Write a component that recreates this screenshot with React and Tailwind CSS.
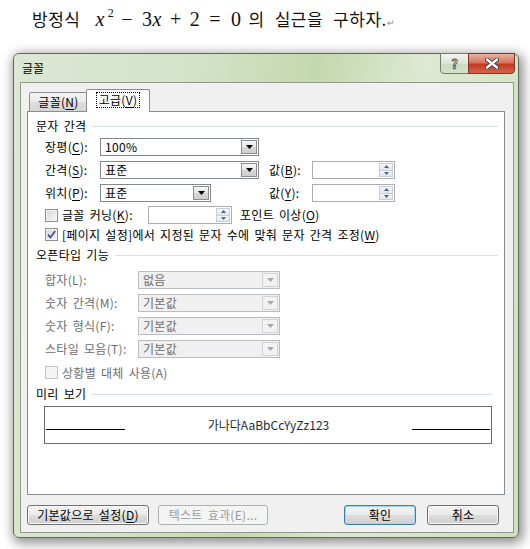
import clsx from 'clsx'

const KR = "font-['Noto_Sans_CJK_KR','Noto_Sans',sans-serif]"

const U = ({ children }) => <span className="underline underline-offset-[2px]">{children}</span>

const Tri = ({ color = '#000' }) => (
  <svg width="7" height="4" viewBox="0 0 7 4">
    <path d="M0 0h7L3.5 4z" fill={color} />
  </svg>
)

function Combo({ value, className, disabled }) {
  return (
    <div
      className={clsx(
        'flex h-[18px] items-stretch border p-px',
        disabled ? 'border-[#b9bcc0] bg-[#f0f0f0] text-[#6d6d6d]' : 'border-[#828790] bg-white text-black',
        className
      )}
    >
      <span className="flex flex-1 items-center pl-[3px] leading-none">{value}</span>
      <span
        className={clsx(
          'flex w-[16px] items-center justify-center border',
          disabled
            ? 'border-[#d2d2d2] bg-[#f2f2f2]'
            : 'border-[#8c8c8c] bg-[linear-gradient(#f6f6f6,#e6e6e6_50%,#d6d6d6_50%,#cfcfcf)]'
        )}
      >
        <Tri color={disabled ? '#a8a8a8' : '#000'} />
      </span>
    </div>
  )
}

const Arrow = ({ up }) => (
  <svg width="5" height="3" viewBox="0 0 5 3">
    <path d={up ? 'M0 3h5L2.5 0z' : 'M0 0h5L2.5 3z'} fill="#4d6185" />
  </svg>
)

function Spin({ className }) {
  return (
    <div className={clsx('flex h-[18px] border border-[#abadb3] bg-white p-px', className)}>
      <span className="flex-1" />
      <span className="flex w-[14px] flex-col">
        <span className="flex flex-1 items-center justify-center border border-[#c6ceda] bg-[linear-gradient(#f5f8fb,#dfe6ee)]">
          <Arrow up />
        </span>
        <span className="flex flex-1 items-center justify-center border border-t-0 border-[#c6ceda] bg-[linear-gradient(#f5f8fb,#dfe6ee)]">
          <Arrow />
        </span>
      </span>
    </div>
  )
}

function Checkbox({ checked, disabled }) {
  return (
    <span
      className={clsx(
        'flex h-[13px] w-[13px] shrink-0 items-center justify-center border',
        disabled
          ? 'border-[#c6c6c6] bg-[#f4f4f4]'
          : 'border-[#8e8f8f] bg-[linear-gradient(135deg,#d6d6d6,#f8f8f8)] shadow-[inset_0_0_0_1px_#f4f4f4]'
      )}
    >
      {checked && (
        <svg width="9" height="9" viewBox="0 0 9 9">
          <path d="M1 4.6l2.4 2.8L8.2 1" fill="none" stroke="#3b4f85" strokeWidth="1.7" />
        </svg>
      )}
    </span>
  )
}

function Header({ children, className }) {
  return (
    <div className={clsx('flex h-[14px] items-center gap-[6px] pl-[8px]', className)}>
      <span className="leading-none">{children}</span>
      <span className="h-px flex-1 bg-[#d5dfe5]" />
    </div>
  )
}

function Btn({ children, className, primary, disabled }) {
  return (
    <div
      className={clsx(
        'flex h-[20px] items-center justify-center rounded-[3px] border leading-none',
        disabled
          ? 'border-[#adb2b5] bg-[#f4f4f4] text-[#9a9a9a]'
          : primary
            ? 'border-[#3c7fb1] bg-[linear-gradient(#f2f2f2,#ebebeb_50%,#dddddd_50%,#cfcfcf)] shadow-[inset_0_0_0_1px_#9fd5f2]'
            : 'border-[#707070] bg-[linear-gradient(#f2f2f2,#ebebeb_50%,#dddddd_50%,#cfcfcf)] shadow-[inset_0_0_0_1px_#fbfbfb]',
        className
      )}
    >
      {children}
    </div>
  )
}

const OPENTYPE = [
  ['합자(L):', '없음'],
  ['숫자 간격(M):', '기본값'],
  ['숫자 형식(F):', '기본값'],
  ['스타일 모음(T):', '기본값'],
]

export default function App() {
  return (
    <div className={clsx('h-[549px] w-[530px] overflow-hidden bg-white text-[12px] text-black', KR)}>
      {/* equation line */}
      <div className="flex h-[53px] items-baseline whitespace-nowrap pl-[32px] pt-[6px] text-[17px] leading-[26px] tracking-[0.5px] text-[#111]">
        <span>방정식</span>
        <span className="ml-[15px] font-['Liberation_Serif',serif] text-[20px] italic">x</span>
        <span className="relative -top-[9px] ml-[3px] font-['Liberation_Serif',serif] text-[12px]">2</span>
        <span className="ml-[7px] font-['Liberation_Serif',serif] text-[20px]">−</span>
        <span className="ml-[9px] font-['Liberation_Serif',serif] text-[20px]">3</span>
        <span className="font-['Liberation_Serif',serif] text-[20px] italic">x</span>
        <span className="ml-[8px] font-['Liberation_Serif',serif] text-[20px]">+</span>
        <span className="ml-[8px] font-['Liberation_Serif',serif] text-[20px]">2</span>
        <span className="ml-[9px] font-['Liberation_Serif',serif] text-[20px]">=</span>
        <span className="ml-[10px] font-['Liberation_Serif',serif] text-[20px]">0</span>
        <span className="ml-[7px]">의</span>
        <span className="ml-[10px]">실근을</span>
        <span className="ml-[10px]">구하자.</span>
        <span className="text-[9px] text-[#8a8a8a]">↵</span>
      </div>

      {/* dialog window */}
      <div className="ml-[13px] flex h-[485px] w-[506px] flex-col rounded-[6px] border border-[#5f6a5c] bg-[linear-gradient(100deg,#dce7d4_0%,#d4e3c8_30%,#c4d8ae_52%,#dde9d2_70%,#cfe0bf_100%)] pl-[6px] pr-[4px] shadow-[2px_3px_12px_2px_rgba(0,0,0,0.45)]">
        {/* title bar */}
        <div className="flex h-[28px] shrink-0 justify-between">
          <span className="ml-[2px] self-center leading-none">글꼴</span>
          <div className="-mr-px -mt-px flex h-[21px]">
            <div className="flex w-[29px] items-center justify-center rounded-bl-[4px] border border-[#6f7d6c] bg-[linear-gradient(#f1f5ee,#dce6d5_50%,#cbd9c0_50%,#d5e2cb)] text-[13px] font-bold leading-none text-[#e9eee6] [-webkit-text-stroke:0.8px_#4a4f48]">
              ?
            </div>
            <div className="-ml-px flex w-[47px] items-center justify-center rounded-br-[4px] border border-[#7b3426] bg-[linear-gradient(#eab2a4,#d9735c_45%,#c2391f_55%,#d6644a)]">
              <svg width="14" height="11" viewBox="0 0 14 11">
                <path d="M2 1.5l10 8M12 1.5l-10 8" stroke="#3a3a3a" strokeWidth="4.2" strokeLinecap="round" />
                <path d="M2 1.5l10 8M12 1.5l-10 8" stroke="#fff" strokeWidth="2.4" strokeLinecap="round" />
              </svg>
            </div>
          </div>
        </div>

        {/* client area */}
        <div className="flex h-[451px] w-[494px] flex-col border border-[#8e9a8a] bg-[#f0f0f0] pl-[6px] pt-[6px] tracking-[0.3px] [word-spacing:2px]">
          {/* tabs */}
          <div className="flex h-[22px] items-end pl-[2px]">
            <div className="flex h-[19px] w-[59px] items-center justify-center rounded-tl-[2px] border border-b-0 border-[#898c95] bg-[linear-gradient(#f3f3f3,#ebebeb_50%,#dedede_50%,#d6d6d6)] leading-none">
              글꼴(<U>N</U>)
            </div>
            <div className="relative z-10 -mb-px -ml-[2px] flex h-[23px] w-[64px] items-center justify-center rounded-t-[2px] border border-b-0 border-[#898c95] bg-white pb-[2px]">
              <span className="border border-dotted border-black px-[2px] py-px leading-none">
                고급(<U>V</U>)
              </span>
            </div>
          </div>

          {/* panel */}
          <div className="flex h-[384px] w-[478px] flex-col border border-[#898c95] bg-white pr-[6px]">
            <Header className="mt-[7px]">문자 간격</Header>

            <div className="mt-[5px] flex h-[18px] items-center pl-[17px]">
              <span className="w-[55px] leading-none">장평(<U>C</U>):</span>
              <Combo value="100%" className="w-[159px]" />
            </div>

            <div className="mt-[5px] flex h-[18px] items-center pl-[17px]">
              <span className="w-[55px] leading-none">간격(<U>S</U>):</span>
              <Combo value="표준" className="w-[159px]" />
              <span className="ml-[10px] w-[43px] leading-none">값(<U>B</U>):</span>
              <Spin className="w-[83px]" />
            </div>

            <div className="mt-[5px] flex h-[18px] items-center pl-[17px]">
              <span className="w-[55px] leading-none">위치(<U>P</U>):</span>
              <div className="w-[159px]">
                <Combo value="표준" className="w-[111px]" />
              </div>
              <span className="ml-[10px] w-[43px] leading-none">값(<U>Y</U>):</span>
              <Spin className="w-[83px]" />
            </div>

            <div className="mt-[4px] flex h-[18px] items-center pl-[17px]">
              <Checkbox />
              <span className="ml-[4px] w-[86px] whitespace-nowrap leading-none">
                글꼴 커닝(<U>K</U>):
              </span>
              <Spin className="w-[84px]" />
              <span className="ml-[8px] leading-none">
                포인트 이상(<U>O</U>)
              </span>
            </div>

            <div className="mt-[4px] flex h-[13px] items-center pl-[17px]">
              <Checkbox checked />
              <span className="ml-[4px] whitespace-nowrap leading-none">
                [페이지 설정]에서 지정된 문자 수에 맞춰 문자 간격 조정(<U>W</U>)
              </span>
            </div>

            <Header className="mt-[7px]">오픈타입 기능</Header>

            <div className="mt-[9px] flex flex-col gap-[5px] pl-[17px]">
              {OPENTYPE.map(([label, value]) => (
                <div key={label} className="flex h-[18px] items-center">
                  <span className="w-[93px] whitespace-nowrap leading-none text-[#6d6d6d]">{label}</span>
                  <Combo value={value} className="w-[142px]" disabled />
                </div>
              ))}
            </div>

            <div className="mt-[8px] flex h-[13px] items-center pl-[17px]">
              <Checkbox disabled />
              <span className="ml-[4px] leading-none text-[#6d6d6d]">상황별 대체 사용(A)</span>
            </div>

            <Header className="mt-[8px] pr-[6px] pl-[6px]">미리 보기</Header>

            <div className="ml-[16px] mt-[5px] flex h-[38px] w-[448px] border border-[#6e6e6e] px-px tracking-normal [word-spacing:normal]">
              <div className="h-[23px] w-[79px] border-b border-black" />
              <div className="flex-1 pt-[11px] text-center leading-[14px] text-[#1b2a3c]">가나다AaBbCcYyZz123</div>
              <div className="h-[23px] w-[78px] border-b border-black" />
            </div>
          </div>

          {/* buttons */}
          <div className="mt-[10px] flex h-[20px] pr-[14px]">
            <Btn className="w-[122px]">
              기본값으로 설정(<U>D</U>)
            </Btn>
            <Btn className="ml-[9px] w-[110px]" disabled>
              텍스트 효과(E)...
            </Btn>
            <Btn className="ml-auto w-[72px]" primary>
              확인
            </Btn>
            <Btn className="ml-[11px] w-[72px]">취소</Btn>
          </div>
        </div>
      </div>
    </div>
  )
}
